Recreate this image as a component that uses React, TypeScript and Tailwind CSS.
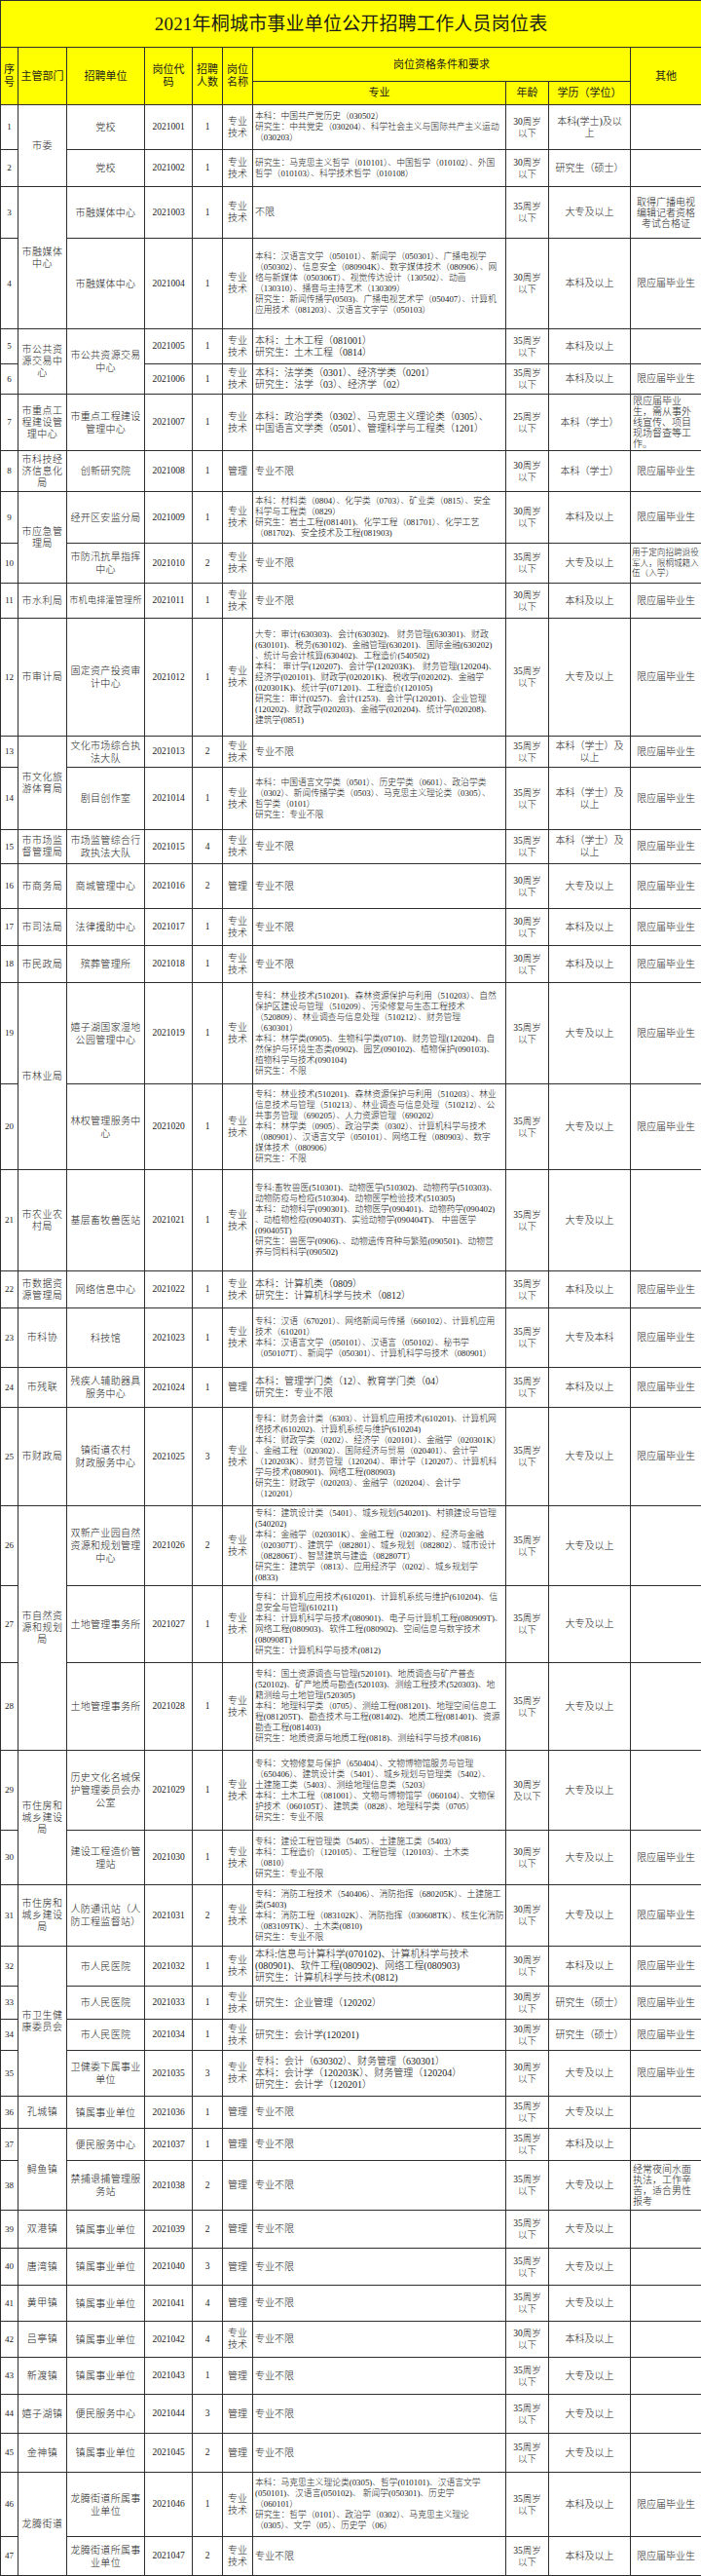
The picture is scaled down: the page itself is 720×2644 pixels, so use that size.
import React from "react";

const P = "专业\n技术";
const M = "管理";
const A30 = "30周岁\n以下";
const A35 = "35周岁\n以下";
const B = "限应届毕业生";
const NL = ["专业不限"];

type Row = {
  h: string;
  dept?: string;
  ds?: number;
  unit?: string;
  us?: number;
  uc?: string;
  code: string;
  cnt: string;
  pos: string;
  major: string[];
  big?: boolean;
  age: string;
  edu: string;
  other?: string;
  oc?: string;
};

const OC_LEFT = "text-left text-[10px] leading-[11px] pl-[2px]";

const rows: Row[] = [
  {
    h: "h-[46px]", dept: "市委", ds: 2, unit: "党校", code: "2021001", cnt: "1", pos: P,
    major: ["本科：中国共产党历史（030502）", "研究生：中共党史（030204）、科学社会主义与国际共产主义运动", "（030203）"],
    age: A30, edu: "本科(学士)及以\n上",
  },
  {
    h: "h-[38px]", unit: "党校", code: "2021002", cnt: "1", pos: P,
    major: ["研究生：马克思主义哲学（010101）、中国哲学（010102）、外国", "哲学（010103）、科学技术哲学（010108）"],
    age: A30, edu: "研究生（硕士）",
  },
  {
    h: "h-[53px]", dept: "市融媒体\n中心", ds: 2, unit: "市融媒体中心", code: "2021003", cnt: "1", pos: P,
    major: ["不限"], big: true, age: A35, edu: "大专及以上",
    other: "取得广播电视\n编辑记者资格\n考试合格证", oc: "text-center text-[10px] leading-[11px]",
  },
  {
    h: "h-[93px]", unit: "市融媒体中心", code: "2021004", cnt: "1", pos: P,
    major: [
      "本科：汉语言文学（050101）、新闻学（050301）、广播电视学",
      "（050302）、信息安全（080904K）、数字媒体技术（080906）、网",
      "络与新媒体（050306T）、视觉传达设计（130502）、动画",
      "（130310）、播音与主持艺术（130309）",
      "研究生：新闻传播学(0503)、广播电视艺术学（050407）、计算机",
      "应用技术（081203）、汉语言文字学（050103）",
    ],
    age: A30, edu: "本科及以上", other: B,
  },
  {
    h: "h-[36px]", dept: "市公共资\n源交易中\n心", ds: 2, unit: "市公共资源交易\n中心", us: 2, code: "2021005", cnt: "1", pos: P,
    major: ["本科：土木工程（081001）", "研究生：土木工程（0814）"], big: true,
    age: A35, edu: "本科及以上",
  },
  {
    h: "h-[31px]", code: "2021006", cnt: "1", pos: P,
    major: ["本科：法学类（0301）、经济学类（0201）", "研究生：法学（03）、经济学（02）"], big: true,
    age: A35, edu: "本科及以上", other: B,
  },
  {
    h: "h-[58px]", dept: "市重点工\n程建设管\n理中心", unit: "市重点工程建设\n管理中心", code: "2021007", cnt: "1", pos: P,
    major: ["本科：政治学类（0302）、马克思主义理论类（0305）、", "中国语言文学类（0501）、管理科学与工程类（1201）"], big: true,
    age: "25周岁\n以下", edu: "本科（学士）",
    other: "限应届毕业\n生，需从事外\n线宣传、项目\n现场督查等工\n作。", oc: OC_LEFT,
  },
  {
    h: "h-[42px]", dept: "市科技经\n济信息化\n局", unit: "创新研究院", code: "2021008", cnt: "1", pos: M,
    major: NL, big: true, age: A30, edu: "本科（学士）", other: B,
  },
  {
    h: "h-[53px]", dept: "市应急管\n理局", ds: 2, unit: "经开区安监分局", code: "2021009", cnt: "1", pos: P,
    major: [
      "本科：材料类（0804）、化学类（0703）、矿业类（0815）、安全",
      "科学与工程类（0829）",
      "研究生：岩土工程(081401)、化学工程（081701）、化学工艺",
      "（081702)、安全技术及工程(081903)",
    ],
    age: A30, edu: "本科及以上", other: B,
  },
  {
    h: "h-[41px]", unit: "市防汛抗旱指挥\n中心", code: "2021010", cnt: "2", pos: P,
    major: NL, big: true, age: A35, edu: "大专及以上",
    other: "用于定向招聘退役\n军人，限桐城籍入\n伍（入学）", oc: "text-left text-[8.6px] leading-[10.5px] pl-[1px]",
  },
  {
    h: "h-[36px]", dept: "市水利局", unit: "市机电排灌管理所", uc: "text-[9px]", code: "2021011", cnt: "1", pos: P,
    major: NL, big: true, age: A30, edu: "本科及以上", other: B,
  },
  {
    h: "h-[121px]", dept: "市审计局", unit: "固定资产投资审\n计中心", code: "2021012", cnt: "1", pos: P,
    major: [
      "大专：审计(630303)、会计(630302)、 财务管理(630301)、财政",
      "(630101)、税务(630102)、金融管理(630201)、国际金融(630202)",
      "、统计与会计核算(630402)、工程造价(540502)",
      "本科： 审计学(120207)、会计学(120203K)、 财务管理(120204)、",
      "经济学(020101)、财政学(020201K)、税收学(020202)、金融学",
      "(020301K)、统计学(071201)、工程造价(120105)",
      "研究生：审计(0257)、会计(1253)、会计学(120201)、企业管理",
      "(120202)、财政学(020203)、金融学(020204)、统计学(020208)、",
      "建筑学(0851)",
    ],
    age: A35, edu: "大专及以上", other: B,
  },
  {
    h: "h-[32px]", dept: "市文化旅\n游体育局", ds: 2, unit: "文化市场综合执\n法大队", code: "2021013", cnt: "2", pos: P,
    major: NL, big: true, age: A35, edu: "本科（学士）及\n以上", other: B,
  },
  {
    h: "h-[64px]", unit: "剧目创作室", code: "2021014", cnt: "1", pos: P,
    major: [
      "本科：中国语言文学类（0501）、历史学类（0601）、政治学类",
      "（0302）、新闻传播学类（0503）、马克思主义理论类（0305）、",
      "哲学类（0101）",
      "研究生：专业不限",
    ],
    age: A35, edu: "本科（学士）及\n以上", other: B,
  },
  {
    h: "h-[35px]", dept: "市市场监\n督管理局", unit: "市场监管综合行\n政执法大队", code: "2021015", cnt: "4", pos: P,
    major: NL, big: true, age: A35, edu: "本科（学士）及\n以上", other: B,
  },
  {
    h: "h-[46px]", dept: "市商务局", unit: "商城管理中心", code: "2021016", cnt: "2", pos: M,
    major: NL, big: true, age: A30, edu: "大专及以上", other: B,
  },
  {
    h: "h-[38px]", dept: "市司法局", unit: "法律援助中心", code: "2021017", cnt: "1", pos: P,
    major: NL, big: true, age: A30, edu: "本科及以上", other: B,
  },
  {
    h: "h-[38px]", dept: "市民政局", unit: "殡葬管理所", code: "2021018", cnt: "1", pos: P,
    major: NL, big: true, age: A30, edu: "本科及以上", other: B,
  },
  {
    h: "h-[104px]", dept: "市林业局", ds: 2, unit: "嬉子湖国家湿地\n公园管理中心", code: "2021019", cnt: "1", pos: P,
    major: [
      "专科：林业技术(510201)、森林资源保护与利用（510203）、自然",
      "保护区建设与管理（510209）、污染修复与生态工程技术",
      "（520809）、林业调查与信息处理（510212）、财务管理",
      "（630301）",
      "本科：林学类(0905)、生物科学类(0710)、财务管理(120204)、自",
      "然保护与环境生态类(0902)、园艺(090102)、植物保护(090103)、",
      "植物科学与技术(090104)",
      "研究生：不限",
    ],
    age: A35, edu: "大专及以上", other: B,
  },
  {
    h: "h-[88px]", unit: "林权管理服务中\n心", code: "2021020", cnt: "1", pos: P,
    major: [
      "专科：林业技术(510201)、森林资源保护与利用（510203）、林业",
      "信息技术与管理（510213）、林业调查与信息处理（510212）、公",
      "共事务管理（690205）、人力资源管理（690202）",
      "本科：林学类（0905）、政治学类（0302）、计算机科学与技术",
      "（080901）、汉语言文学（050101）、网络工程（080903）、数字",
      "媒体技术（080906）",
      "研究生：不限",
    ],
    age: A35, edu: "大专及以上", other: B,
  },
  {
    h: "h-[104px]", dept: "市农业农\n村局", unit: "基层畜牧兽医站", code: "2021021", cnt: "1", pos: P,
    major: [
      "专科:畜牧兽医(510301)、动物医学(510302)、动物药学(510303)、",
      "动物防疫与检疫(510304)、动物医学检验技术(510305)",
      "本科：动物科学(090301)、动物医学(090401)、动物药学(090402)",
      "、动植物检疫(090403T)、实验动物学(090404T)、 中兽医学",
      "(090405T)",
      "研究生：兽医学(0906)、、动物遗传育种与繁殖(090501)、动物营",
      "养与饲料科学(090502)",
    ],
    age: A35, edu: "大专及以上",
  },
  {
    h: "h-[38px]", dept: "市数据资\n源管理局", unit: "网络信息中心", code: "2021022", cnt: "1", pos: P,
    major: ["本科：计算机类（0809）", "研究生：计算机科学与技术（0812）"], big: true,
    age: A35, edu: "本科及以上", other: B,
  },
  {
    h: "h-[61px]", dept: "市科协", unit: "科技馆", code: "2021023", cnt: "1", pos: P,
    major: [
      "专科：汉语（670201）、网络新闻与传播（660102）、计算机应用",
      "技术（610201）",
      "本科：汉语言文学（050101）、汉语言（050102）、秘书学",
      "（050107T）、新闻学（050301）、计算机科学与技术（080901）",
    ],
    age: A35, edu: "大专及本科", other: B,
  },
  {
    h: "h-[41px]", dept: "市残联", unit: "残疾人辅助器具\n服务中心", code: "2021024", cnt: "1", pos: M,
    major: ["本科：管理学门类（12）、教育学门类（04）", "研究生：专业不限"], big: true,
    age: A35, edu: "本科及以上", other: B,
  },
  {
    h: "h-[101px]", dept: "市财政局", unit: "镇街道农村\n财政服务中心", code: "2021025", cnt: "3", pos: P,
    major: [
      "专科：财务会计类（6303）、计算机应用技术(610201)、计算机网",
      "络技术(610202)、计算机系统与维护(610204)",
      "本科：财政学类（0202）、经济学（020101）、金融学（020301K）",
      "、金融工程（020302）、国际经济与贸易（020401）、会计学",
      "（120203K）、财务管理（120204）、审计学（120207）、计算机科",
      "学与技术(080901)、网络工程(080903)",
      "研究生：财政学（020203）、金融学（020204）、会计学",
      "（120201）",
    ],
    age: A35, edu: "大专及以上", other: B,
  },
  {
    h: "h-[82px]", dept: "市自然资\n源和规划\n局", ds: 3, unit: "双新产业园自然\n资源和规划管理\n中心", code: "2021026", cnt: "2", pos: P,
    major: [
      "专科：建筑设计类（5401）、城乡规划(540201)、村镇建设与管理",
      "(540202)",
      "本科：金融学（020301K）、金融工程（020302）、经济与金融",
      "（020307T）、建筑学（082801）、城乡规划（082802）、城市设计",
      "（082806T）、智慧建筑与建造（082807T）",
      "研究生：建筑学（0813）、应用经济学（0202）、城乡规划学",
      "(0833)",
    ],
    age: A35, edu: "大专及以上",
  },
  {
    h: "h-[79px]", unit: "土地管理事务所", code: "2021027", cnt: "1", pos: P,
    major: [
      "专科：计算机应用技术(610201)、计算机系统与维护(610204)、信",
      "息安全与管理(610211)",
      "本科：计算机科学与技术(080901)、电子与计算机工程(080909T)、",
      "网络工程(080903)、软件工程(080902)、空间信息与数字技术",
      "(080908T)",
      "研究生：计算机科学与技术(0812)",
    ],
    age: A35, edu: "大专及以上",
  },
  {
    h: "h-[90px]", unit: "土地管理事务所", code: "2021028", cnt: "1", pos: P,
    major: [
      "专科：国土资源调查与管理(520101)、地质调查与矿产普查",
      "(520102)、矿产地质与勘查(520103)、测绘工程技术(520303)、地",
      "籍测绘与土地管理(520305)",
      "本科：地理科学类（0705）、测绘工程(081201)、地理空间信息工",
      "程(081205T)、勘查技术与工程(081402)、地质工程(081401)、资源",
      "勘查工程(081403)",
      "研究生：地质资源与地质工程(0818)、测绘科学与技术(0816)",
    ],
    age: A35, edu: "大专及以上",
  },
  {
    h: "h-[82px]", dept: "市住房和\n城乡建设\n局", ds: 2, unit: "历史文化名城保\n护管理委员会办\n公室", code: "2021029", cnt: "1", pos: P,
    major: [
      "专科：文物修复与保护（650404）、文物博物馆服务与管理",
      "（650406）、建筑设计类（5401）、城乡规划与管理类（5402）、",
      "土建施工类（5403）、测绘地理信息类（5203）",
      "本科：土木工程（081001）、文物与博物馆学（060104）、文物保",
      "护技术（060105T）、建筑类（0828）、地理科学类（0705）",
      "研究生：专业不限",
    ],
    age: "30周岁\n及以下", edu: "大专及以上",
  },
  {
    h: "h-[56px]", unit: "建设工程造价管\n理站", code: "2021030", cnt: "1", pos: P,
    major: [
      "专科：建设工程管理类（5405）、土建施工类（5403）",
      "本科：工程造价（120105）、工程管理（120103）、土木类",
      "（0810）",
      "研究生：专业不限",
    ],
    age: A30, edu: "大专及以上", other: B,
  },
  {
    h: "h-[63px]", dept: "市住房和\n城乡建设\n局", unit: "人防通讯站（人\n防工程监督站）", code: "2021031", cnt: "2", pos: P,
    major: [
      "专科：消防工程技术（540406）、消防指挥（680205K）、土建施工",
      "类(5403)",
      "本科：消防工程（083102K）、消防指挥（030608TK）、核生化消防",
      "（083109TK）、土木类(0810)",
      "研究生：专业不限",
    ],
    age: A30, edu: "大专及以上", other: B,
  },
  {
    h: "h-[41px]", dept: "市卫生健\n康委员会", ds: 4, unit: "市人民医院", code: "2021032", cnt: "1", pos: P,
    major: [
      "本科:信息与计算科学(070102)、计算机科学与技术",
      "(080901)、软件工程(080902)、网络工程(080903)",
      "研究生：计算机科学与技术(0812)",
    ],
    big: true, age: A30, edu: "本科及以上", other: B,
  },
  {
    h: "h-[34px]", unit: "市人民医院", code: "2021033", cnt: "1", pos: P,
    major: ["研究生：企业管理（120202）"], big: true, age: A30, edu: "研究生（硕士）", other: B,
  },
  {
    h: "h-[32px]", unit: "市人民医院", code: "2021034", cnt: "1", pos: P,
    major: ["研究生：会计学(120201)"], big: true, age: A30, edu: "研究生（硕士）", other: B,
  },
  {
    h: "h-[47px]", unit: "卫健委下属事业\n单位", code: "2021035", cnt: "3", pos: P,
    major: ["专科：会计（630302）、财务管理（630301）", "本科：会计学（120203K）、财务管理（120204）", "研究生：会计学（120201）"],
    big: true, age: A30, edu: "大专及以上", other: B,
  },
  { h: "h-[33px]", dept: "孔城镇", unit: "镇属事业单位", code: "2021036", cnt: "1", pos: M, major: NL, big: true, age: A35, edu: "大专及以上" },
  { h: "h-[33px]", dept: "鲟鱼镇", ds: 2, unit: "便民服务中心", code: "2021037", cnt: "1", pos: M, major: NL, big: true, age: A35, edu: "本科及以上" },
  {
    h: "h-[51px]", unit: "禁捕退捕管理服\n务站", code: "2021038", cnt: "2", pos: M, major: NL, big: true, age: A35, edu: "大专及以上",
    other: "经常夜间水面\n执法，工作辛\n苦，适合男性\n报考", oc: OC_LEFT,
  },
  { h: "h-[39px]", dept: "双港镇", unit: "镇属事业单位", code: "2021039", cnt: "2", pos: M, major: NL, big: true, age: A35, edu: "大专及以上" },
  { h: "h-[38px]", dept: "唐湾镇", unit: "镇属事业单位", code: "2021040", cnt: "3", pos: M, major: NL, big: true, age: A35, edu: "大专及以上" },
  { h: "h-[37px]", dept: "黄甲镇", unit: "镇属事业单位", code: "2021041", cnt: "4", pos: M, major: NL, big: true, age: A35, edu: "大专及以上" },
  { h: "h-[37px]", dept: "吕亭镇", unit: "镇属事业单位", code: "2021042", cnt: "4", pos: P, major: NL, big: true, age: A30, edu: "本科及以上" },
  { h: "h-[38px]", dept: "新渡镇", unit: "镇属事业单位", code: "2021043", cnt: "1", pos: M, major: NL, big: true, age: A35, edu: "大专及以上" },
  { h: "h-[40px]", dept: "嬉子湖镇", unit: "便民服务中心", code: "2021044", cnt: "3", pos: M, major: NL, big: true, age: A35, edu: "大专及以上" },
  { h: "h-[40px]", dept: "金神镇", unit: "镇属事业单位", code: "2021045", cnt: "2", pos: M, major: NL, big: true, age: A35, edu: "大专及以上" },
  {
    h: "h-[66px]", dept: "龙腾街道", ds: 2, unit: "龙腾街道所属事\n业单位", code: "2021046", cnt: "1", pos: P,
    major: [
      "本科：马克思主义理论类(0305)、哲学(010101)、汉语言文学",
      "(050101)、汉语言(050102)、 新闻学(050301)、历史学",
      "（060101）",
      "研究生：哲学（0101）、政治学（0302）、马克思主义理论",
      "（0305）、文学（05）、历史学（06）",
    ],
    age: A35, edu: "本科及以上", other: B,
  },
  {
    h: "h-[40px]", unit: "龙腾街道所属事\n业单位", code: "2021047", cnt: "2", pos: P,
    major: NL, big: true, age: A35, edu: "本科及以上", other: B,
  },
];

const cell = "border border-[#2e2e2e] p-0 align-middle overflow-hidden";
const th = "border border-[#2e2e2e] p-0 align-middle font-normal text-[11px] leading-[13px] whitespace-pre text-center";

export default function App() {
  return (
    <div className="w-[720px] bg-white text-[#1a1a1a] font-light font-['Liberation_Serif','Noto_Sans_CJK_SC',serif]">
      <table className="w-[720px] table-fixed border-collapse">
        <colgroup>
          <col className="w-[18px]" />
          <col className="w-[50px]" />
          <col className="w-[80px]" />
          <col className="w-[49px]" />
          <col className="w-[31px]" />
          <col className="w-[31px]" />
          <col className="w-[260px]" />
          <col className="w-[44px]" />
          <col className="w-[84px]" />
          <col className="w-[73px]" />
        </colgroup>
        <thead>
          <tr className="h-[48px] bg-[#ffff00]">
            <th colSpan={10} className="border border-[#2e2e2e] p-0 align-middle font-normal text-[19px] leading-[24px] text-center tracking-[0.2px]">
              2021年桐城市事业单位公开招聘工作人员岗位表
            </th>
          </tr>
          <tr className="h-[35px] bg-[#ffff00]">
            <th rowSpan={2} className={th}>{"序\n号"}</th>
            <th rowSpan={2} className={th}>主管部门</th>
            <th rowSpan={2} className={th}>招聘单位</th>
            <th rowSpan={2} className={th}>{"岗位代\n码"}</th>
            <th rowSpan={2} className={th}>{"招聘\n人数"}</th>
            <th rowSpan={2} className={th}>{"岗位\n名称"}</th>
            <th colSpan={3} className={th}>岗位资格条件和要求</th>
            <th rowSpan={2} className={th}>其他</th>
          </tr>
          <tr className="h-[24px] bg-[#ffff00]">
            <th className={th}>专业</th>
            <th className={th}>年龄</th>
            <th className={th}>学历（学位）</th>
          </tr>
        </thead>
        <tbody>
          {rows.map((r, i) => (
            <tr key={r.code} className={r.h}>
              <td className={cell + " text-center text-[9px] leading-[11px]"}>{i + 1}</td>
              {r.dept !== undefined && (
                <td rowSpan={r.ds ?? 1} className={cell + " text-center text-[10px] leading-[12px] whitespace-pre tracking-[0.5px]"}>
                  {r.dept}
                </td>
              )}
              {r.unit !== undefined && (
                <td rowSpan={r.us ?? 1} className={cell + " text-center leading-[13px] whitespace-pre tracking-[0.3px] " + (r.uc ?? "text-[10px]")}>
                  {r.unit}
                </td>
              )}
              <td className={cell + " text-center text-[9.5px] leading-[11px]"}>{r.code}</td>
              <td className={cell + " text-center text-[9.5px] leading-[11px]"}>{r.cnt}</td>
              <td className={cell + " text-center text-[10px] leading-[12px] whitespace-pre"}>{r.pos}</td>
              <td className={cell + " text-left pl-[2px]"}>
                <div className={r.big ? "text-[10px] leading-[12px]" : "text-[8.8px] leading-[11px]"}>
                  {r.major.map((l, k) => (
                    <div key={k} className="whitespace-pre">{l}</div>
                  ))}
                </div>
              </td>
              <td className={cell + " text-center text-[9.5px] leading-[12px] whitespace-pre"}>{r.age}</td>
              <td className={cell + " text-center text-[10px] leading-[12px] whitespace-pre"}>{r.edu}</td>
              <td className={cell + " whitespace-pre " + (r.oc ?? "text-center text-[10px] leading-[12px]")}>
                {r.other ?? ""}
              </td>
            </tr>
          ))}
        </tbody>
      </table>
    </div>
  );
}
